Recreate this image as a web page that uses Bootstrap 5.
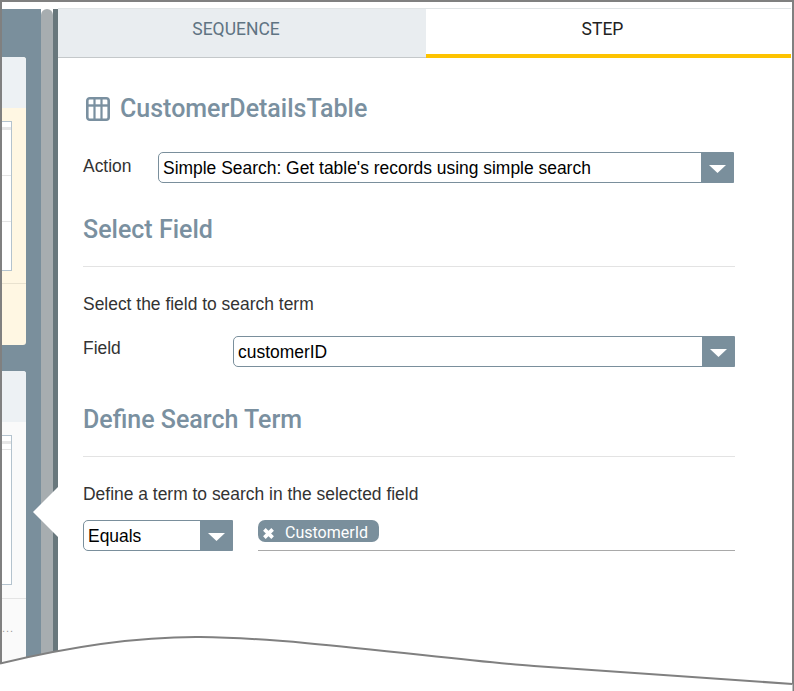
<!DOCTYPE html>
<html lang="en">
<head>
<meta charset="utf-8">
<title>Step editor</title>
<link rel="stylesheet" href="https://cdn.jsdelivr.net/npm/bootstrap@5.3.0/dist/css/bootstrap.min.css">
<style>
html,body{height:691px;overflow:hidden;background:#fff;}
body{font-family:"Liberation Sans",Arial,sans-serif;font-size:17.450px;color:#333;}
.shell{position:relative;height:691px;border:2px solid #808080;border-bottom:0;padding-top:6px;}
.stage{height:683px;}
.rail{width:56px;flex:none;margin-top:1px;}
.rail-main{width:39px;background:#7a8f9c;padding-top:48px;overflow:hidden;}
.rail-thumb{width:12px;background:#a7adb0;border-radius:6px 6px 0 0;}
.rail-edge{width:5px;background:#68777c;}
.mini{width:24px;border-radius:0 3px 3px 0;overflow:hidden;}
.mini-a{height:288px;margin-bottom:26px;background:#fff7e3;}
.mini-b{height:400px;background:#fafafa;}
.mini-head{height:51px;background:#edf1f4;}
.mini-box{width:10px;background:#fff;border:1px solid #b4c3ce;border-left:0;margin-top:13px;height:150px;}
.mini-band{height:3px;background:#e6e6e6;margin-top:5px;}
.mini-line{height:1px;background:#e4e4e4;margin-top:45px;}
.mini-b .mini-line{margin-top:5px;}
.mini-rule{height:1px;margin-top:12px;background:#e9e2cf;}
.mini-b .mini-rule{background:#e4e4e4;margin-top:13px;}
.mini-dots{font-size:11px;line-height:1;color:#999;letter-spacing:1px;margin-top:24px;}
.pane{position:relative;min-width:0;padding:0;}
.tabbar{height:50px;}
.tabbar .nav-link{font-family:Roboto,sans-serif;font-size:17.500px;line-height:40px;padding:0 12px 0 0;text-align:center;border-radius:0;}
.tab-seq{width:368px;background:#e9edf0;color:#5f7483;border-top:1px solid #e0e4e6;border-bottom:1px solid #c4c8ca;}
.tab-step{width:365px;background:#fff;color:#222;border-top:1px solid #e0e4e6;border-bottom:4px solid #fdc300;}
.sheet{padding:0 57px 0 25px;}
.ttl{font-family:Roboto,sans-serif;font-weight:500;font-size:25px;line-height:30px;color:#7a90a0;margin:0;}
.ttl-main{margin-top:36px;margin-bottom:28px;}
.ttl-ico{width:24px;height:24px;margin-left:3px;margin-right:10px;flex:none;}
.lbl{margin:0;line-height:24px;}
.lbl-act{width:75px;flex:none;transform:translateY(-2px);}
.lbl-fld{width:150px;flex:none;transform:translateY(-4px);}
.pick{height:31px;padding:1px 40px 0 4px;font-size:17.450px;line-height:28px;color:#000;border:1px solid #7a8f9c;border-radius:5px 0 0 5px;background-color:#fff;background-image:url("data:image/svg+xml,%3Csvg xmlns='http://www.w3.org/2000/svg' width='33' height='31'%3E%3Crect width='33' height='31' fill='%237a8f9c'/%3E%3Cpath d='M8 13h17l-8.500 8z' fill='%23fff'/%3E%3C/svg%3E");background-repeat:no-repeat;background-position:right -1px top -1px;background-size:33px 31px;}
.pick:focus{box-shadow:none;border-color:#7a8f9c;}
.pick-act{margin-right:1px;}
.pick-eq{width:150px;flex:none;padding-top:0;}
.sec{margin-top:32px;}
.sec-rule{margin:21px 0 25px;border-color:#e3e3e3;opacity:1;}
.row-fld{margin-top:20px;}
.sec-two{margin-top:38px;}
.term-row{margin-top:14px;}
.tagbox{margin-left:25px;height:31px;border-bottom:1px solid #a9a9a9;}
.chip{display:inline-flex;align-items:center;height:22px;width:121px;background:#7a8f9c;color:#fff;border-radius:7px;font-family:Roboto,sans-serif;font-weight:400;font-size:16px;padding:4px 0 0 4px;}
.chip svg{width:13px;height:13px;margin-right:10px;flex:none;}
.notch{position:absolute;left:-25px;top:479px;width:25px;height:50px;background:#fff;clip-path:polygon(0 50%,100% 0,100% 100%);}
.tear{position:absolute;left:0;top:0;width:794px;height:691px;}
</style>
</head>
<body>
<div class="shell">
  <div class="stage d-flex">
    <aside class="rail d-flex">
      <div class="rail-main">
        <div class="mini mini-a">
          <div class="mini-head"></div>
          <div class="mini-box"><div class="mini-band"></div><div class="mini-line"></div><div class="mini-line"></div></div>
          <div class="mini-rule"></div>
        </div>
        <div class="mini mini-b">
          <div class="mini-head"></div>
          <div class="mini-box"><div class="mini-band"></div><div class="mini-line"></div></div>
          <div class="mini-rule"></div>
          <div class="mini-dots">...</div>
        </div>
      </div>
      <div class="rail-thumb"></div>
      <div class="rail-edge"></div>
    </aside>
    <main class="pane flex-grow-1">
      <div class="notch"></div>
      <nav class="nav flex-nowrap tabbar">
        <a class="nav-link tab-seq" href="#">SEQUENCE</a>
        <a class="nav-link tab-step" href="#">STEP</a>
      </nav>
      <div class="sheet">
        <div class="d-flex align-items-center ttl-main">
          <svg class="ttl-ico" viewBox="0 0 24 24" fill="none" stroke="#7a90a0" stroke-width="2.600"><rect x="1.300" y="1.300" width="21.400" height="21.400" rx="2.500"/><path d="M1 8.500h22" stroke-width="2.400"/><path d="M8.500 1v22M15.500 1v22" stroke-width="2.200"/></svg>
          <h1 class="ttl">CustomerDetailsTable</h1>
        </div>
        <div class="d-flex align-items-center">
          <label class="lbl lbl-act" for="a1">Action</label>
          <select id="a1" class="form-select pick pick-act"><option>Simple Search: Get table's records using simple search</option></select>
        </div>
        <h2 class="ttl sec">Select Field</h2>
        <hr class="sec-rule">
        <p class="lbl">Select the field to search term</p>
        <div class="d-flex align-items-center row-fld">
          <label class="lbl lbl-fld" for="a2">Field</label>
          <select id="a2" class="form-select pick"><option>customerID</option></select>
        </div>
        <h2 class="ttl sec-two">Define Search Term</h2>
        <hr class="sec-rule">
        <p class="lbl">Define a term to search in the selected field</p>
        <div class="d-flex term-row">
          <select class="form-select pick pick-eq"><option>Equals</option></select>
          <div class="tagbox flex-grow-1 d-flex align-items-start">
            <span class="badge chip"><svg viewBox="0 0 12 12"><path d="M2.200 2.200l7.600 7.600M9.800 2.200l-7.600 7.600" stroke="#fff" stroke-width="3.400" fill="none"/></svg>CustomerId</span>
          </div>
        </div>
      </div>
    </main>
  </div>
</div>
<svg class="tear" viewBox="0 0 794 691"><path d="M0 663.500C60 649 130 636.500 200 637C300 638 450 660 534 666L792.500 684V691H0Z" fill="#fff"/><path d="M0 663.500C60 649 130 636.500 200 637C300 638 450 660 534 666L792.500 684" fill="none" stroke="#808080" stroke-width="2"/></svg>
</body>
</html>
